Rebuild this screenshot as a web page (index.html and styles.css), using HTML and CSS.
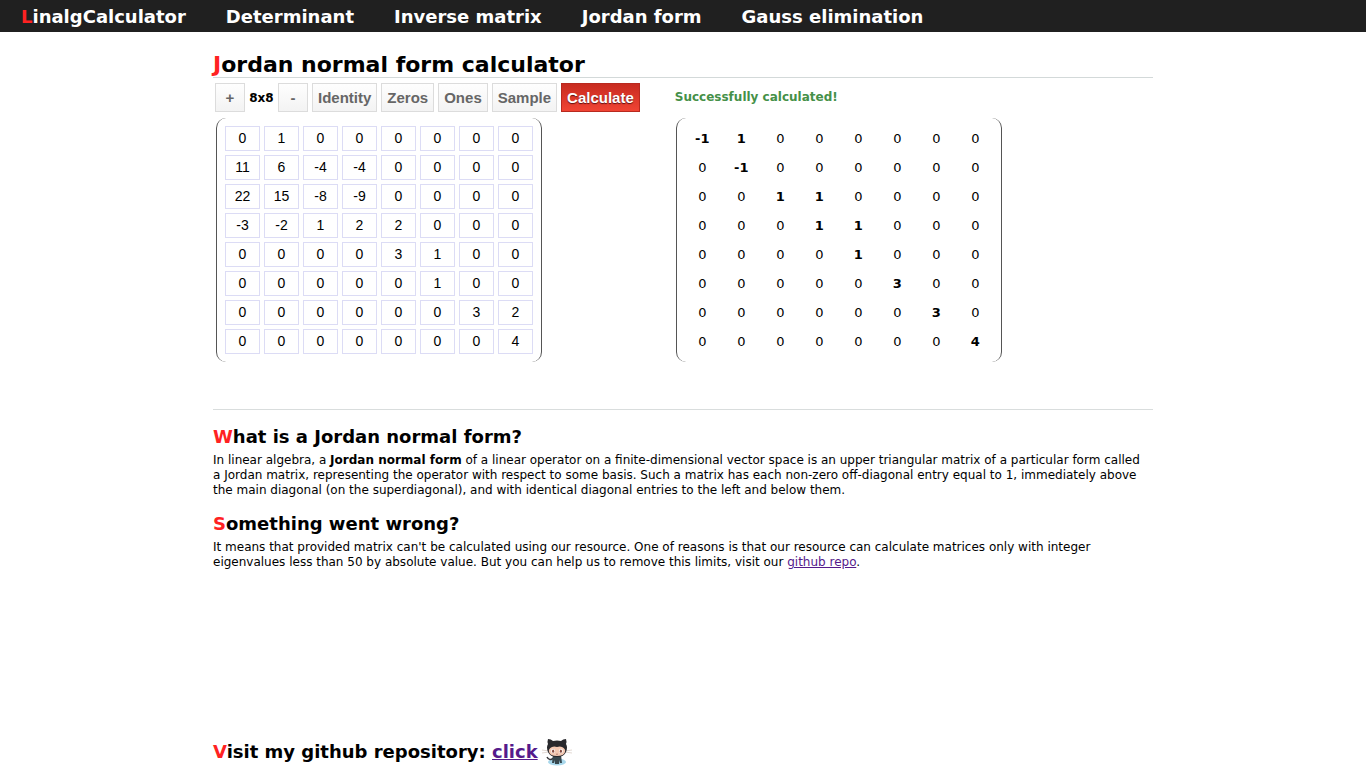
FILE: index.html
```html
<!DOCTYPE html>
<html lang="en">
<head>
<meta charset="utf-8">
<meta name="viewport" content="width=device-width, initial-scale=1">
<title>Jordan normal form calculator</title>
<link rel="stylesheet" href="styles.css">
</head>
<body>
<header class="topbar">
  <nav class="nav">
    <a class="nav-link accent" href="#home">LinalgCalculator</a>
    <a class="nav-link" href="#determinant">Determinant</a>
    <a class="nav-link" href="#inverse">Inverse matrix</a>
    <a class="nav-link" href="#jordan">Jordan form</a>
    <a class="nav-link" href="#gauss">Gauss elimination</a>
  </nav>
</header>
<main class="content">
  <h1 class="title accent">Jordan normal form calculator</h1>
  <section class="calculator">
    <div class="source">
      <div class="toolbar">
        <button class="btn btn-size" type="button" aria-label="Increase size">+</button>
        <span class="size">8x8</span>
        <button class="btn btn-size" type="button" aria-label="Decrease size">-</button>
        <button class="btn" type="button">Identity</button>
        <button class="btn" type="button">Zeros</button>
        <button class="btn" type="button">Ones</button>
        <button class="btn" type="button">Sample</button>
        <button class="btn btn-primary" type="button">Calculate</button>
      </div>
      <table class="matrix" id="input-matrix" aria-label="Input matrix"></table>
    </div>
    <div class="result">
      <p class="status">Successfully calculated!</p>
      <table class="matrix" id="output-matrix" aria-label="Jordan normal form"></table>
    </div>
  </section>
  <section class="article">
    <h2 class="heading accent">What is a Jordan normal form?</h2>
    <p class="text">In linear algebra, a <b>Jordan normal form</b> of a linear operator on a finite-dimensional vector space is an upper triangular matrix of a particular form called a Jordan matrix, representing the operator with respect to some basis. Such a matrix has each non-zero off-diagonal entry equal to 1, immediately above the main diagonal (on the superdiagonal), and with identical diagonal entries to the left and below them.</p>
    <h2 class="heading accent">Something went wrong?</h2>
    <p class="text">It means that provided matrix can't be calculated using our resource. One of reasons is that our resource can calculate matrices only with integer eigenvalues less than 50 by absolute value. But you can help us to remove this limits, visit our <a class="link" href="#repo">github repo</a>.</p>
  </section>
</main>
<footer class="footer">
  <p class="visit"><span class="visit-text accent">Visit my github repository: <a class="link" href="#repo">click</a></span>
    <svg class="octocat" viewBox="0 0 32 28" aria-hidden="true">
      <path d="M1 12l7 1M1 15l7-1M24 13l7-1M24 14l7 1" stroke="#d5c8c0" stroke-width=".7"/>
      <ellipse cx="16" cy="24" rx="9" ry="3.5" fill="#a9d8ec"/>
      <path d="M12 20c-2 3-5 1-6-1" fill="none" stroke="#38383c" stroke-width="1.5"/>
      <path d="M12 17h8l1 8h-2l-.5-3-.5 4h-4l-.5-4-.5 3h-2z" fill="#38484e"/>
      <path d="M7 1q3 0 5 2 4-1 8 0 2-2 5-2 1 3 0 5 2 3 0 8-2 5-9 5t-9-5q-2-5 0-8-1-2 0-5z" fill="#28282c"/>
      <path d="M11 9q2-1 5 0 3-1 5 0 4 2 3 5-1 4-8 4t-8-4q-1-3 3-5z" fill="#f3c8b2"/>
      <ellipse cx="12" cy="13" rx="1.8" ry="2.3" fill="#fff"/>
      <ellipse cx="20" cy="13" rx="1.8" ry="2.3" fill="#fff"/>
      <ellipse cx="12.1" cy="13.2" rx="1.1" ry="1.6" fill="#874d43"/>
      <ellipse cx="19.9" cy="13.2" rx="1.1" ry="1.6" fill="#874d43"/>
      <path d="M15 16q1 .8 2 0" fill="none" stroke="#874d43" stroke-width=".6"/>
    </svg>
  </p>
</footer>
<script src="matrix.js"></script>
</body>
</html>
```

FILE: styles.css
```css
* {
  box-sizing: border-box;
}

body {
  margin: 0;
  min-height: 100vh;
  display: flex;
  flex-direction: column;
  background: #fff;
  color: #000;
  font-family: Verdana, "DejaVu Sans", sans-serif;
  font-size: 12px;
}

h1, h2, p {
  margin: 0;
}

.accent::first-letter {
  color: #f22;
}

.topbar {
  background: #202020;
  padding: 2px 21px 0;
}

.nav {
  display: flex;
  flex-wrap: wrap;
  gap: 0 40px;
}

.nav-link {
  color: #fff;
  font-size: 18px;
  font-weight: bold;
  line-height: 30px;
  text-decoration: none;
}

.content,
.footer {
  width: 100%;
  max-width: 940px;
  margin: 0 auto;
}

.content {
  flex: 1;
  padding-top: 20px;
}

.title {
  border-bottom: 1px solid #d3d9d9;
  font-size: 22px;
  line-height: 25px;
}

.calculator {
  display: flex;
  flex-wrap: wrap;
  gap: 0 35px;
  padding: 5px 2px 47px;
  border-bottom: 1px solid #d9dddd;
}

.toolbar {
  display: flex;
  align-items: center;
  gap: 4px;
}

.btn {
  height: 29px;
  padding: 0 5px;
  border: 1px solid #dcdcdc;
  background: linear-gradient(#fefefe, #f3f3f3);
  color: #666;
  font: bold 15px "Liberation Sans", Arial, sans-serif;
}

.btn-size {
  width: 30px;
}

.btn-primary {
  border-color: #b8291f;
  background: linear-gradient(#c82b20, #f04434);
  color: #fff;
  text-shadow: 0 1px 1px #601010;
}

.size {
  width: 25px;
  font-weight: bold;
  text-align: center;
}

.status {
  color: #459048;
  font-weight: bold;
  line-height: 29px;
}

.matrix {
  margin: 6px 1px 0;
  padding: 4px;
  border: solid #555;
  border-width: 0 1px;
  border-radius: 10px;
  border-collapse: separate;
  border-spacing: 4px;
}

.matrix td {
  width: 35px;
  height: 25px;
  padding: 0;
  font-size: 13px;
  text-align: center;
}

.matrix .nonzero {
  font-weight: bold;
}

.cell {
  display: block;
  width: 35px;
  height: 25px;
  padding: 0 0 2px;
  border: 1px solid #dcdcf5;
  background: #fff;
  color: #000;
  font: 14px "Liberation Sans", Arial, sans-serif;
  text-align: center;
}

.article {
  padding-top: 14px;
}

.heading {
  margin-bottom: 4px;
  font-size: 18px;
  line-height: 25px;
}

.text {
  margin-bottom: 13px;
  padding-right: 4px;
  line-height: 15px;
}

.link {
  color: #551a8b;
}

.visit {
  display: flex;
  align-items: center;
  gap: 3px;
  font-size: 18px;
  font-weight: bold;
  line-height: 32px;
}

.visit-text {
  display: block;
  padding-top: 1px;
}

.octocat {
  width: 32px;
  height: 28px;
}
```

FILE: matrix.js
```js
const source = [
  [0, 1, 0, 0, 0, 0, 0, 0],
  [11, 6, -4, -4, 0, 0, 0, 0],
  [22, 15, -8, -9, 0, 0, 0, 0],
  [-3, -2, 1, 2, 2, 0, 0, 0],
  [0, 0, 0, 0, 3, 1, 0, 0],
  [0, 0, 0, 0, 0, 1, 0, 0],
  [0, 0, 0, 0, 0, 0, 3, 2],
  [0, 0, 0, 0, 0, 0, 0, 4]
];
const result = [
  [-1, 1, 0, 0, 0, 0, 0, 0],
  [0, -1, 0, 0, 0, 0, 0, 0],
  [0, 0, 1, 1, 0, 0, 0, 0],
  [0, 0, 0, 1, 1, 0, 0, 0],
  [0, 0, 0, 0, 1, 0, 0, 0],
  [0, 0, 0, 0, 0, 3, 0, 0],
  [0, 0, 0, 0, 0, 0, 3, 0],
  [0, 0, 0, 0, 0, 0, 0, 4]
];

function fill(id, rows, draw) {
  const table = document.getElementById(id);
  rows.forEach((values, r) => {
    const row = table.insertRow();
    values.forEach((value, c) => draw(row.insertCell(), value, r + 1, c + 1));
  });
}

fill("input-matrix", source, (td, value, r, c) => {
  const input = document.createElement("input");
  input.type = "text";
  input.className = "cell";
  input.value = value;
  input.setAttribute("aria-label", "Row " + r + ", column " + c);
  td.append(input);
});

fill("output-matrix", result, (td, value) => {
  td.textContent = value;
  if (value !== 0) td.className = "nonzero";
});
```
